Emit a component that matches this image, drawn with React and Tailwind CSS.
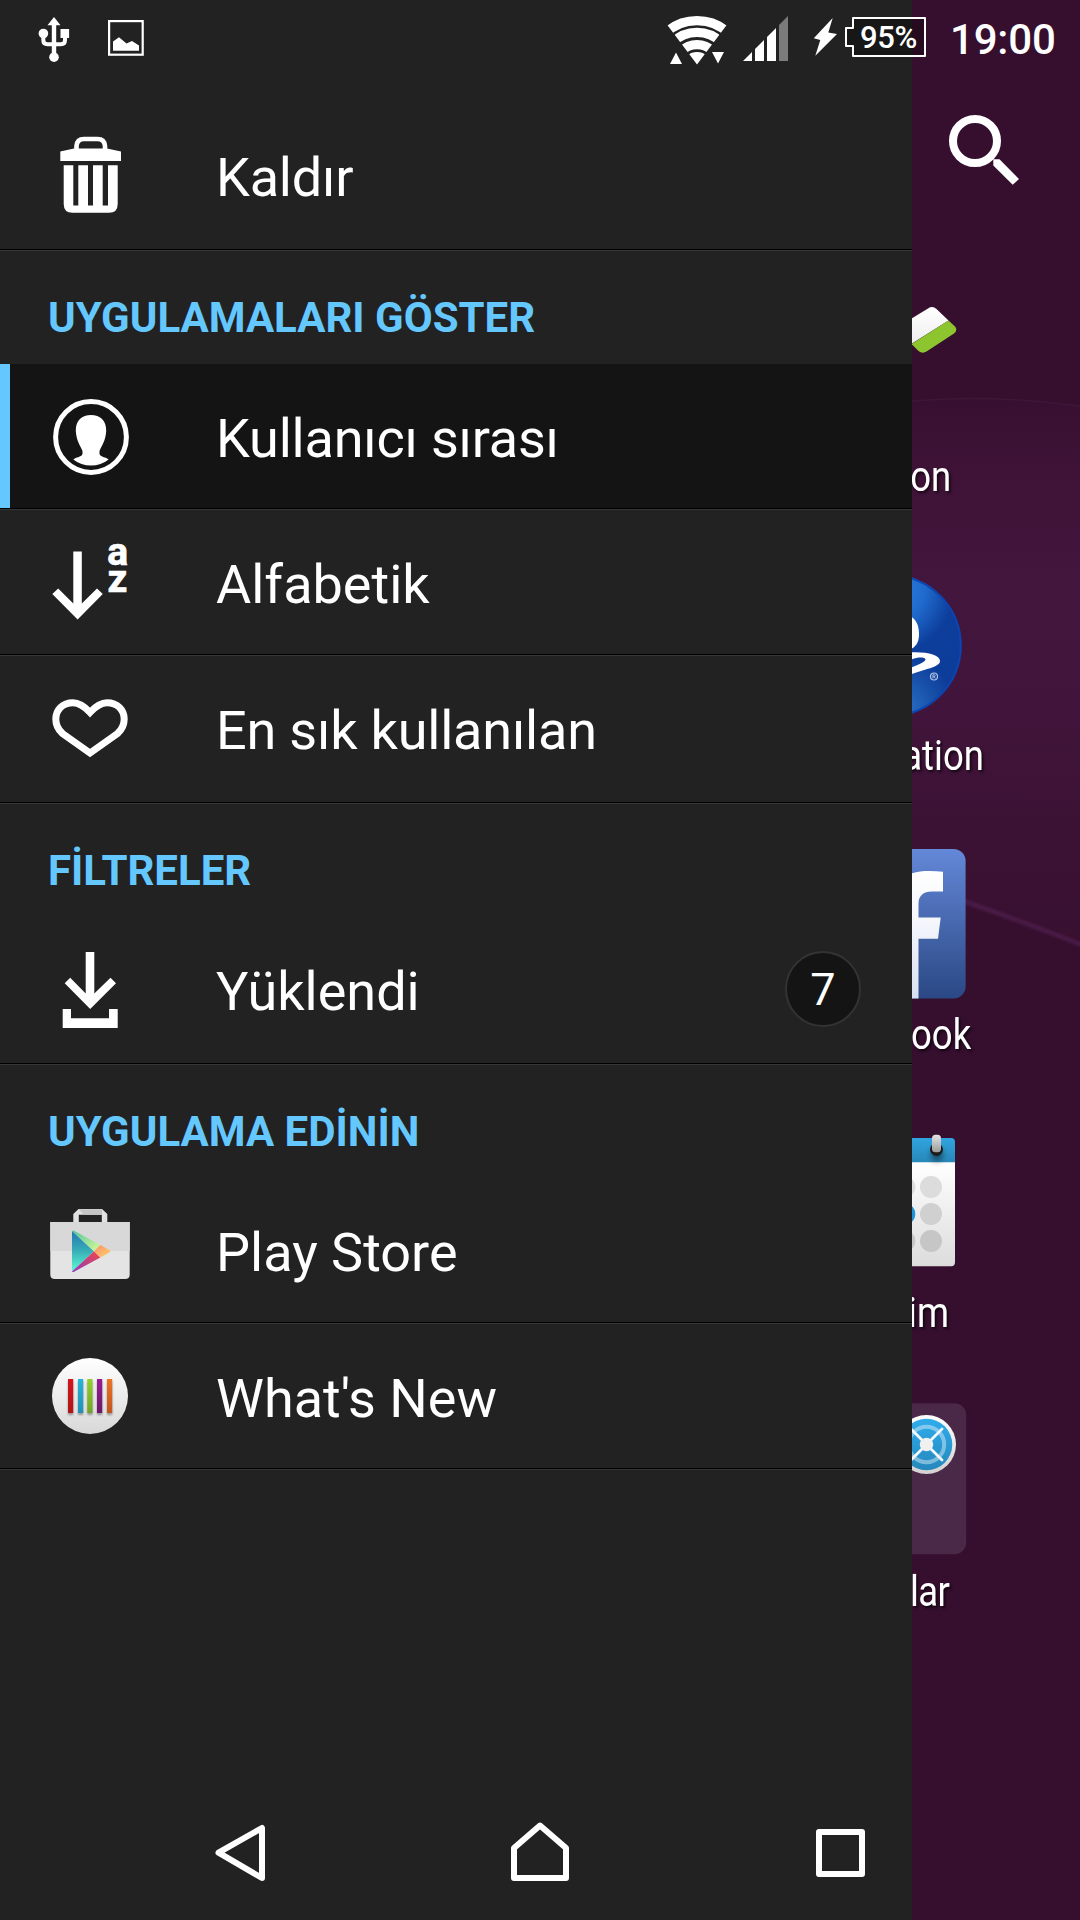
const SANS = "font-['Roboto','Noto_Sans',sans-serif]";

function UsbIcon() {
  return (
    <svg width="36" height="75" viewBox="36 0 36 75" className="ml-9" fill="#fff">
      <path d="M54 17 L60.5 25.3 H56.2 V53 H51.8 V25.3 H47.5Z" />
      <circle cx="54" cy="57.2" r="4.8" />
      <circle cx="43.4" cy="33.5" r="4.8" />
      <rect x="60.5" y="29" width="8.6" height="9" />
      <path d="M43.3 36 V40 Q43.3 44.2 47.5 44.2 H61 Q65 44.2 65 40 V36" fill="none" stroke="#fff" strokeWidth="4" />
    </svg>
  );
}

function PictureIcon() {
  return (
    <svg width="36" height="75" viewBox="108 0 36 75" className="ml-9">
      <rect x="109.1" y="21.1" width="33.6" height="33.6" fill="none" stroke="#fff" strokeWidth="2.2" />
      <path d="M113 50.7 V41.5 L119 37.3 L126.5 43.5 L132 41 L139 45.5 V50.7Z" fill="#fff" />
    </svg>
  );
}

function WifiIcon() {
  return (
    <svg width="62" height="75" viewBox="666 0 62 75">
      <clipPath id="wedge">
        <path d="M697 64.5 L659 14 H735Z" />
      </clipPath>
      <g clipPath="url(#wedge)" fill="none" stroke="#fff" strokeWidth="9.2">
        <circle cx="697" cy="67" r="46.4" />
        <circle cx="697" cy="67" r="34.6" />
        <circle cx="697" cy="67" r="22.4" />
        <circle cx="697" cy="67" r="15" fill="#fff" stroke="none" />
      </g>
      <path d="M670 64 L676 52.5 L682 64Z M712 52 H724 L718 63.5Z" fill="#fff" />
    </svg>
  );
}

function SignalIcon() {
  return (
    <svg width="46" height="75" viewBox="743 0 46 75" className="ml-[15px]">
      <path d="M743 61 L752 52 V61Z M755 49 L764 40 V61 H755Z M767 37 L776 28 V61 H767Z" fill="#fff" />
      <path d="M779 25 L788 16 V61 H779Z" fill="#7b7b7b" />
    </svg>
  );
}

function BatteryIcon() {
  return (
    <div className="ml-6 grid grid-cols-[113px]">
      <svg width="113" height="75" viewBox="813 0 113 75" className="col-start-1 row-start-1">
        <path d="M832.7 18 L828.3 32.6 L837 34 L815.3 55.8 L820.3 40 L813.8 38.3Z" fill="#fff" />
        <path d="M853 18 H925 V56 H853 V46 H846 V28 H853Z" fill="#000" fillOpacity=".3" stroke="#fff" strokeWidth="2" strokeLinejoin="round" />
      </svg>
      <span className="col-start-1 row-start-1 pl-[47px] text-[31px] font-medium leading-[76px] tracking-[-0.4px]">95%</span>
    </div>
  );
}

function StatusBar() {
  return (
    <header className="flex h-[75px] items-start text-white">
      <UsbIcon />
      <PictureIcon />
      <div className="grow" />
      <WifiIcon />
      <SignalIcon />
      <BatteryIcon />
      <span className="ml-6 w-[130px] text-[42px] font-medium leading-[80px] tracking-[-0.2px]">19:00</span>
    </header>
  );
}

/* Drawer icons share one tile size; the viewBox origin follows the row's offset in the screen. */
function Tile({ top, children }) {
  return (
    <svg width="84" height="144" viewBox={`48 ${top} 84 144`} className="ml-12 shrink-0" fill="#fff">
      {children}
    </svg>
  );
}

function TrashIcon() {
  return (
    <Tile top={103}>
      <path d="M76.5 150 V146 Q77 139 84 139 H97.5 Q104.500 139 105 146 V150" fill="none" stroke="#fff" strokeWidth="4.6" />
      <path d="M60.3 151.500 L74 148.500 H107 L121 151.500 V161 H60.3Z" />
      <path d="M63.700 165.300 H73.300 V205.500 H78.300 V165.300 H88 V205.500 H93 V165.300 H102.700 V205.500 H108 V165.300 H117.700 V204 Q117.700 212.800 109 212.800 H72.500 Q63.700 212.800 63.700 204Z" />
    </Tile>
  );
}

function UserIcon() {
  return (
    <Tile top={364}>
      <circle cx="91" cy="437" r="35.4" fill="none" stroke="#fff" strokeWidth="5" />
      <path d="M91 415 C100 415 106.500 420.500 106.200 431 C105.500 441 102 445 99.500 451 V454 C101 457.500 106 457 108.700 459.500 Q101 465.500 91 465.500 Q81 465.500 73.300 459.500 C76 457 81 457.500 82.500 454 V451 C80 445 76.500 441 75.800 431 C75.500 420.500 82 415 91 415Z" />
    </Tile>
  );
}

function SortIcon() {
  return (
    <Tile top={510}>
      <path d="M73.300 551.500 H81.800 V603.500 L97 588.500 L102.800 594 L77.600 619.500 L52.300 594 L58.200 588.500 L73.300 603.500Z" />
      <text x="107.200" y="565" fontSize="39" fontWeight="700" stroke="#fff" strokeWidth=".7">a</text>
      <text x="107.500" y="592.300" fontSize="39" fontWeight="700" stroke="#fff" strokeWidth=".7">z</text>
    </Tile>
  );
}

function HeartIcon() {
  return (
    <Tile top={656}>
      <path d="M90 712.300 C85 707 80 702.700 73 702.700 C62.500 702.700 55.800 710 55.800 719 C55.800 725.500 58.500 730 62.500 733.500 L90 753 L117.500 733.500 C121.500 730 124.200 725.500 124.200 719 C124.200 710 117.500 702.700 107 702.700 C100 702.700 95 707 90 712.300Z" fill="none" stroke="#fff" strokeWidth="7" />
    </Tile>
  );
}

function DownloadIcon() {
  return (
    <Tile top={917}>
      <path d="M85.700 952 H94.300 V993.500 L110.500 977.700 L116 983.300 L90.200 1009 L64.700 983.300 L70.200 977.700 L85.700 993.500Z" />
      <path d="M62.700 1009 H71 V1018.300 H109 V1009 H117.700 V1028 H62.700Z" />
    </Tile>
  );
}

function PlayIcon() {
  return (
    <Tile top={1178}>
      <defs>
        <linearGradient id="pBlue" x1="0" y1="0" x2="0" y2="1"><stop offset="0" stopColor="#2474b4" /><stop offset=".5" stopColor="#38b0b8" /><stop offset="1" stopColor="#5cfcd4" /></linearGradient>
        <linearGradient id="pGreen" x1="0" y1="0" x2="1" y2="1"><stop offset="0" stopColor="#4cc49c" /><stop offset="1" stopColor="#dcfc98" /></linearGradient>
        <linearGradient id="pOrange" x1="0" y1="0" x2="1" y2="1"><stop offset="0" stopColor="#fc8c70" /><stop offset="1" stopColor="#fcd468" /></linearGradient>
        <linearGradient id="pRed" x1="1" y1="0" x2="0" y2="1"><stop offset="0" stopColor="#f04848" /><stop offset="1" stopColor="#9038c0" /></linearGradient>
      </defs>
      <path d="M73.300 1223 V1214 L78.500 1209 H102 L107.300 1214 V1223 H101.800 V1214.800 H78.800 V1223Z" fill="#e2e2e2" />
      <path d="M78.500 1209.300 H102 V1214.800 H84 Z" fill="#c4c4c4" />
      <path d="M50.300 1222 H129.700 V1274.500 Q129.700 1279 125 1279 H55 Q50.300 1279 50.300 1274.500Z" fill="#e4e4e4" />
      <path d="M50.300 1222 H129.700 V1251 H50.300Z" fill="#d8d8d8" />
      <path d="M72 1231 L94 1251.200 L72 1271.500Z" fill="url(#pBlue)" />
      <path d="M72 1231 Q73 1230 74.500 1231 L100.300 1245 L94 1251.200Z" fill="url(#pGreen)" />
      <path d="M72 1271.500 Q73 1272.500 74.500 1271.500 L100.300 1257.500 L94 1251.200Z" fill="url(#pRed)" />
      <path d="M100.300 1245 L109.500 1250 Q111 1251.200 109.500 1252.500 L100.300 1257.500 L94 1251.200Z" fill="url(#pOrange)" />
    </Tile>
  );
}

function WhatsNewIcon() {
  const bars = [
    [68, "#d4141c", "#b01418"],
    [78, "#28b4d8", "#2090b4"],
    [87.3, "#94d030", "#70a428"],
    [97, "#981c94", "#6c1868"],
    [107, "#ec7424", "#c4541c"],
  ];
  return (
    <Tile top={1324}>
      <defs>
        <linearGradient id="disc" x1="0" y1="0" x2="0" y2="1"><stop offset="0" stopColor="#fff" /><stop offset="1" stopColor="#d8d8d8" /></linearGradient>
        {bars.map(([x, a, b]) => (
          <linearGradient key={x} id={`bar${Math.round(x)}`} x1="0" y1="0" x2="0" y2="1"><stop offset="0" stopColor={a} /><stop offset="1" stopColor={b} /></linearGradient>
        ))}
        <filter id="soft" x="-100%" width="300%"><feGaussianBlur stdDeviation="1.200" /></filter>
      </defs>
      <circle cx="90" cy="1396" r="38" fill="url(#disc)" />
      {bars.map(([x]) => (
        <g key={x}>
          <rect x={x} y="1381" width="5.200" height="34" fill="#000" fillOpacity=".35" filter="url(#soft)" />
          <rect x={x} y="1379" width="5.200" height="34" fill={`url(#bar${Math.round(x)})`} />
        </g>
      ))}
    </Tile>
  );
}

function Row({ icon, label, selected, last, badge, tight }) {
  return (
    <div className={last ? "h-[148px]" : "h-[146px]"}>
      <div
        className={
          "relative flex items-start border-b border-black " +
          (last ? "h-[147px] " : "h-[145px] ") +
          (selected ? "bg-[#141414]" : "bg-[#222222]")
        }
      >
        {selected && <span className="absolute left-0 top-0 h-[144px] w-[10px] bg-[#64c8ff]" />}
        {icon}
        <span className={"ml-[84px] grow whitespace-nowrap text-[54px] leading-[149px] " + (tight ? "tracking-[-0.2px]" : "tracking-normal")}>
          {label}
        </span>
        {badge && (
          <span className="mr-[51px] mt-[34px] flex h-[76px] w-[76px] items-center justify-center rounded-full border-2 border-[#333333] bg-[#141414] text-[45px] leading-none">
            {badge}
          </span>
        )}
      </div>
      <div className="h-px bg-[#363636]" />
    </div>
  );
}

function Heading({ children }) {
  return (
    <h2 className="h-[113px] pl-12 pt-[10px] text-[42px] font-bold leading-[113px] text-[#64c8ff]">{children}</h2>
  );
}

function Drawer() {
  return (
    <nav className="h-[1920px] w-[912px] shrink-0 bg-[#222222] pt-[103px] text-white">
      <Row icon={<TrashIcon />} label="Kaldır" last tight />
      <Heading>UYGULAMALARI GÖSTER</Heading>
      <Row icon={<UserIcon />} label="Kullanıcı sırası" selected tight />
      <Row icon={<SortIcon />} label="Alfabetik" />
      <Row icon={<HeartIcon />} label="En sık kullanılan" last tight />
      <Heading>FİLTRELER</Heading>
      <Row icon={<DownloadIcon />} label="Yüklendi" badge="7" last />
      <Heading>UYGULAMA EDİNİN</Heading>
      <Row icon={<PlayIcon />} label="Play Store" />
      <Row icon={<WhatsNewIcon />} label="What's New" />
    </nav>
  );
}

function CardArt() {
  return (
    <>
      <defs>
        <linearGradient id="card" x1="0" y1="0" x2="0" y2="1"><stop offset="0" stopColor="#fff" /><stop offset="1" stopColor="#ececec" /></linearGradient>
      </defs>
      <path d="M905 322.500 L928 308.500 Q932.500 305.500 936.500 309 L948.500 320.500 L905 348Z" fill="url(#card)" />
      <path d="M948.500 320.500 L955 326.500 Q958 330 954 333.500 L926.500 351.500 Q922.500 354 918.500 351 L911.500 344Z" fill="#8dc52f" />
    </>
  );
}

function ConsoleArt() {
  return (
    <>
      <defs>
        <radialGradient id="orb" cx="890" cy="590" r="115" gradientUnits="userSpaceOnUse"><stop offset="0" stopColor="#2c84e0" /><stop offset=".3" stopColor="#1f6acc" /><stop offset=".55" stopColor="#0d3e9c" /><stop offset="1" stopColor="#0c3c98" /></radialGradient>
        <radialGradient id="orbGlow" cx="900" cy="710" r="55" gradientUnits="userSpaceOnUse"><stop offset="0" stopColor="#2c74c8" /><stop offset="1" stopColor="#2c74c8" stopOpacity="0" /></radialGradient>
      </defs>
      <circle cx="890.500" cy="645.500" r="71.200" fill="url(#orb)" />
      <circle cx="890.500" cy="645.500" r="71.200" fill="url(#orbGlow)" />
      <circle cx="890.500" cy="645.500" r="70.200" fill="none" stroke="#0c44b0" strokeWidth="2" />
      <path d="M911 616.500 C917 620 919 627 919 634 C919 641 917 646 911 649Z" fill="#fff" />
      <path d="M911 652.300 C926 651.500 940 654.500 940 661 C940 667.500 922 669.500 911 674.500 V667.500 C918 665 926 661.500 925.500 659.300 C924.500 656.500 916 657.500 911 659.500Z" fill="#fff" />
      <circle cx="934" cy="676.500" r="3.500" fill="none" stroke="#b4c4e4" strokeWidth="1.200" />
      <path d="M932.900 678.500 V674.700 H934.300 Q935.300 674.800 935.200 675.800 Q935 676.700 934.200 676.700 H933 M934.300 676.700 L935.300 678.500" fill="none" stroke="#b4c4e4" strokeWidth=".9" />
    </>
  );
}

function SocialArt() {
  return (
    <>
      <defs>
        <linearGradient id="fbBlue" x1="0" y1="0" x2="0" y2="1"><stop offset="0" stopColor="#6488d8" /><stop offset="1" stopColor="#2a4884" /></linearGradient>
        <linearGradient id="fbWhite" x1="0" y1="0" x2="0" y2="1"><stop offset="0" stopColor="#fff" /><stop offset=".4" stopColor="#f4f6fc" /><stop offset="1" stopColor="#d8e0f0" /></linearGradient>
      </defs>
      <rect x="816" y="849" width="149.600" height="149.500" rx="12" fill="url(#fbBlue)" />
      <path d="M911 873.500 C920 870.300 932 870.500 943 871.700 V891.500 H932 Q918.500 891.500 918.500 904 V917.500 H940.700 L938 938.800 H918.500 V998.500 H911Z" fill="url(#fbWhite)" />
    </>
  );
}

function CalendarArt() {
  return (
    <>
      <defs>
        <linearGradient id="calTop" x1="0" y1="0" x2="0" y2="1"><stop offset="0" stopColor="#30a4e0" /><stop offset="1" stopColor="#2888b8" /></linearGradient>
        <linearGradient id="calPage" x1="0" y1="0" x2="0" y2="1"><stop offset="0" stopColor="#fff" /><stop offset="1" stopColor="#dcdcdc" /></linearGradient>
        <linearGradient id="calRing" x1="0" y1="0" x2="0" y2="1"><stop offset="0" stopColor="#e4e4e4" /><stop offset="1" stopColor="#9c9c9c" /></linearGradient>
        <filter id="calSoft" x="-50%" y="-50%" width="200%" height="200%"><feGaussianBlur stdDeviation="3" /></filter>
      </defs>
      <path d="M900 1162 H955 V1262 Q955 1266.300 951 1266.300 H900Z" fill="url(#calPage)" />
      <path d="M900 1138 H951 Q955 1138 955 1142 V1162.300 H900Z" fill="url(#calTop)" />
      <circle cx="937" cy="1155" r="6" fill="#000" fillOpacity=".5" filter="url(#calSoft)" />
      <circle cx="936.500" cy="1149.500" r="6.500" fill="#1c1c1c" />
      <rect x="932" y="1134.700" width="9" height="17.500" rx="3.500" fill="url(#calRing)" />
      <circle cx="931" cy="1187" r="11" fill="#dcdcdc" />
      <circle cx="931" cy="1214" r="11" fill="#d0d0d0" />
      <circle cx="931" cy="1241" r="11" fill="#c6c6c6" />
      <circle cx="904.300" cy="1187" r="11" fill="#dcdcdc" />
      <circle cx="904.300" cy="1214" r="11" fill="#2094d4" />
      <circle cx="904.300" cy="1241" r="11" fill="#c6c6c6" />
    </>
  );
}

function FolderArt() {
  return (
    <>
      <defs>
        <linearGradient id="rim" x1="0" y1="0" x2="0" y2="1"><stop offset="0" stopColor="#fff" /><stop offset="1" stopColor="#d4d0d0" /></linearGradient>
        <linearGradient id="dial" x1="0" y1="0" x2="0" y2="1"><stop offset="0" stopColor="#30acec" /><stop offset="1" stopColor="#2488bc" /></linearGradient>
      </defs>
      <rect x="816.500" y="1403.800" width="149.200" height="150" rx="11" fill="#4a2847" stroke="#512f4e" strokeOpacity=".7" />
      <circle cx="926.500" cy="1444.500" r="29.500" fill="url(#rim)" />
      <circle cx="926.500" cy="1444.500" r="25.800" fill="url(#dial)" />
      <circle cx="926.500" cy="1444.500" r="17.700" fill="none" stroke="#fff" strokeOpacity=".4" strokeWidth="4" />
      <path d="M911 1429 L942 1460 M942 1429 L911 1460" stroke="#f4f8fc" strokeWidth="2.700" strokeLinecap="round" />
      <circle cx="926.500" cy="1444.500" r="6.700" fill="#f0f0f0" />
    </>
  );
}

function AppCell({ top, art, label, inset }) {
  return (
    <div className="flex flex-col items-end">
      <svg width="168" height="190" viewBox={`912 ${top} 168 190`} className="shrink-0">{art}</svg>
      <span className={"origin-right scale-x-[0.87] whitespace-nowrap text-[42px] leading-[58px] text-white [text-shadow:2px_2px_3px_rgba(0,0,0,0.7)] " + inset}>
        {label}
      </span>
    </div>
  );
}

function HomeStrip() {
  return (
    <main className="relative h-[1920px] w-[168px] overflow-hidden bg-[#360f2f]">
      <svg width="168" height="1920" viewBox="912 0 168 1920" className="absolute left-0 top-0">
        <defs>
          <linearGradient id="sky" x1="0" y1="390" x2="0" y2="950" gradientUnits="userSpaceOnUse">
            <stop offset="0" stopColor="#370f30" />
            <stop offset=".2" stopColor="#401439" />
            <stop offset=".35" stopColor="#42163d" />
            <stop offset=".58" stopColor="#41153b" />
            <stop offset=".75" stopColor="#3c1235" />
            <stop offset="1" stopColor="#381030" />
          </linearGradient>
          <filter id="haze"><feGaussianBlur stdDeviation="1.500" /></filter>
        </defs>
        <path d="M912 401 Q990 394 1080 406 V945 L966 903 L912 885Z" fill="url(#sky)" />
        <path d="M912 401 Q990 394 1080 406" fill="none" stroke="#4a2044" strokeOpacity=".4" strokeWidth="1.500" />
        <path d="M900 880 L966 902 Q1030 924 1100 952" fill="none" stroke="#4c1d49" strokeWidth="4" filter="url(#haze)" />
      </svg>
      <svg width="168" height="183" viewBox="912 75 168 183" className="relative mt-[75px]">
        <circle cx="975" cy="141" r="22" fill="none" stroke="#fff" strokeWidth="8" />
        <path d="M993.300 159.300 H999.500 L1019 179 L1012.700 184.800 L993.300 165.500Z" fill="#fff" />
      </svg>
      <div className="relative grid grid-cols-[168px] grid-rows-[279px_279px_278px_279px_279px]">
        <AppCell top={258} art={<CardArt />} label="on" inset="mr-[129px]" />
        <AppCell top={537} art={<ConsoleArt />} label="ation" inset="mr-[96px]" />
        <AppCell top={816} art={<SocialArt />} label="ook" inset="mr-[109px]" />
        <AppCell top={1094} art={<CalendarArt />} label="im" inset="mr-[131px]" />
        <AppCell top={1373} art={<FolderArt />} label="lar" inset="mr-[131px] tracking-[-0.7px]" />
      </div>
    </main>
  );
}

function NavBar() {
  return (
    <footer className="flex h-[130px] items-center text-white">
      <svg width="60" height="130" viewBox="210 1790 60 130" className="ml-[210px]" fill="none" stroke="#fff" strokeWidth="6" strokeLinejoin="round">
        <path d="M218.500 1852.700 L262 1828 V1878Z" />
      </svg>
      <svg width="64" height="130" viewBox="508 1790 64 130" className="ml-[238px]" fill="none" stroke="#fff" strokeWidth="6" strokeLinejoin="round">
        <path d="M540 1825.500 L566 1848 V1878 H514 V1848Z" />
      </svg>
      <svg width="60" height="130" viewBox="810 1790 60 130" className="ml-[238px]" fill="none" stroke="#fff" strokeWidth="6" strokeLinejoin="round">
        <path d="M819 1832 H862 V1874 H819Z" />
      </svg>
    </footer>
  );
}

export default function App() {
  return (
    <div className={"relative flex h-[1920px] w-[1080px] overflow-hidden bg-[#360f2f] " + SANS}>
      <Drawer />
      <HomeStrip />
      <div className="absolute inset-x-0 top-0">
        <StatusBar />
      </div>
      <div className="absolute inset-x-0 bottom-0">
        <NavBar />
      </div>
    </div>
  );
}
